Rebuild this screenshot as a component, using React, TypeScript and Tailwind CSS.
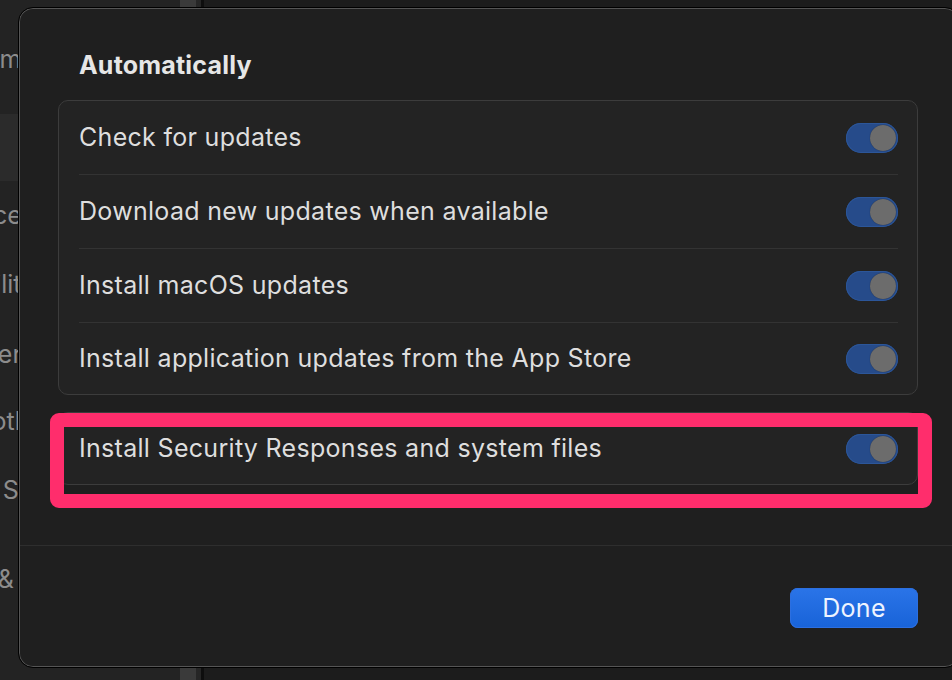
import React from "react";

const sidebarItems = [
  { label: "Screen Time", cls: "h-[70px] mt-[25px] ml-[-113px]" },
  { label: "General", cls: "h-[67px] mt-[19px] ml-[-111px] bg-[#2b2b2b]" },
  { label: "Appearance", cls: "h-[69px] ml-[-122px]" },
  { label: "Accessibility", cls: "h-[70px] ml-[-113px]" },
  { label: "Control Center", cls: "h-[70px] ml-[-151px]" },
  { label: "Siri & Spotlight", cls: "h-[63px] ml-[-108px]" },
  { label: "Privacy & Security", cls: "h-[70px] mt-[3px] ml-[-115px]" },
  { label: "Desktop & Dock", cls: "h-[70px] mt-[19px] ml-[-107px]" },
];

const group1 = [
  "Check for updates",
  "Download new updates when available",
  "Install macOS updates",
  "Install application updates from the App Store",
];

function Toggle() {
  return (
    <div className="relative w-[52px] h-[30px] rounded-full bg-[#264b8a] shadow-[inset_0_0_0_1px_#2c5699] flex items-center justify-end pr-[2px] shrink-0">
      <div className="w-[26px] h-[26px] rounded-full bg-[#6c6c6c] shadow-[0_0_1px_rgba(0,0,0,0.5)]" />
    </div>
  );
}

function Row({ label, last }: { label: string; last?: boolean }) {
  return (
    <div className={"flex items-center justify-between ml-[20px] mr-[19px] " + (last ? "h-[71px]" : "h-[74px] border-b border-[#333333]")}>
      <span className="text-[25px] text-[#dedede] tracking-[0.3px]">{label}</span>
      <Toggle />
    </div>
  );
}

export default function App() {
  return (
    <div className="relative w-[952px] h-[680px] overflow-hidden bg-[#1c1c1c] font-['Inter','Liberation_Sans',sans-serif]">
      {/* background window */}
      <div className="flex h-full">
        <div className="w-[180px] h-full bg-[#232323] flex flex-col overflow-hidden">
          {sidebarItems.map((it) => (
            <div key={it.label} className={"flex items-center shrink-0 " + it.cls}>
              <span className="whitespace-nowrap text-[25px] text-[#8c8c8c]">{it.label}</span>
            </div>
          ))}
        </div>
        <div className="w-[16px] h-full bg-[#3a3a3a]" />
        <div className="w-[5px] h-full bg-[#262626]" />
        <div className="w-[3px] h-full bg-[#0e0e0e]" />
        <div className="flex-1 h-full bg-[#1c1c1c]" />
      </div>

      {/* sheet dialog */}
      <div className="absolute left-[18px] top-[7px] w-[942px] h-[661px] rounded-[15px] border border-black bg-[#1f1f1f] shadow-[inset_0_0_0_1px_#555555] flex flex-col overflow-hidden">
        <div className="pl-[60px] pt-[42px] h-[72px]">
          <h2 className="text-[25px] leading-[30px] font-bold text-[#e6e6e6] tracking-[0.2px]">Automatically</h2>
        </div>
        <div className="ml-[39px] w-[860px] mt-[20px] rounded-[10px] border border-[#3c3c3c] bg-[#232323]">
          {group1.map((l, i) => (
            <Row key={l} label={l} last={i === group1.length - 1} />
          ))}
        </div>
        <div className="ml-[39px] w-[860px] mt-[17px] rounded-[10px] border border-[#3c3c3c] bg-[#232323]">
          <Row label="Install Security Responses and system files" last />
        </div>
        <div className="mt-[60px] ml-[1px] h-px bg-[#2e2e2e]" />
        <div className="flex justify-start pl-[771px] pt-[42px]">
          <button className="w-[128px] h-[40px] rounded-[8px] bg-gradient-to-b from-[#2a74e8] to-[#1863d8] text-[25px] text-[#eef4ff] leading-none tracking-[0.3px] flex items-center justify-center shadow-[inset_0_0_0_1px_#2c6fe0]">
            Done
          </button>
        </div>
      </div>

      {/* annotation highlight */}
      <div className="absolute left-[50px] top-[413px] w-[882px] h-[95px] rounded-[9px] border-[14px] border-[#ff2d6c]" />
    </div>
  );
}
